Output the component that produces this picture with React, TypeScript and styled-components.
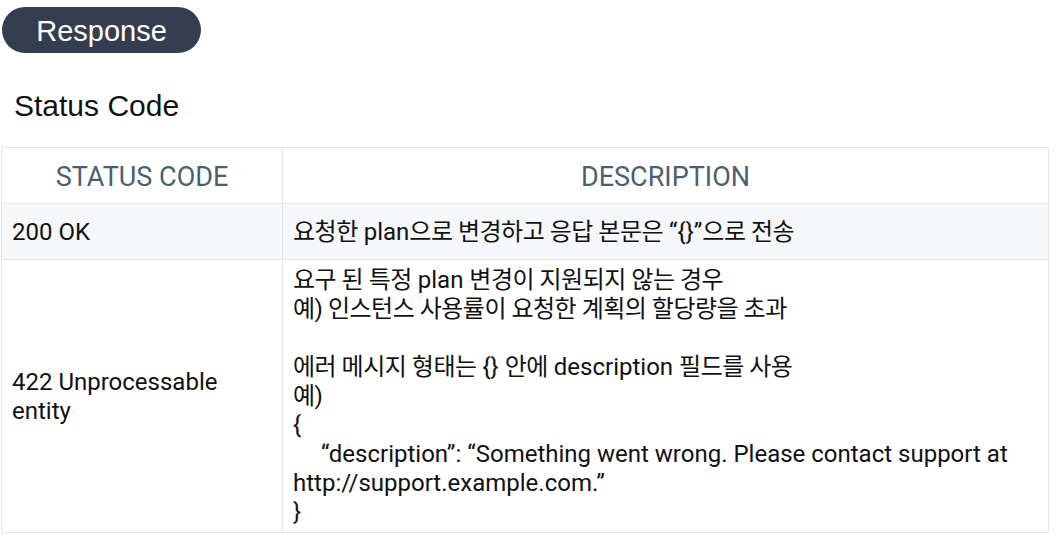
import React from "react";
import styled, { createGlobalStyle } from "styled-components";

const GlobalStyle = createGlobalStyle`
  html, body { margin: 0; padding: 0; background: #ffffff; }
  body { font-family: Roboto, "Noto Sans CJK KR", sans-serif; color: #111111; }
`;

const Page = styled.div`
  padding: 7px 9px 0 1px;
  display: flex;
  flex-direction: column;
  align-items: flex-start;
`;

const Badge = styled.div`
  margin-left: 1px;
  width: 199px;
  height: 46px;
  box-sizing: border-box;
  padding-top: 2px;
  border-radius: 23px;
  background: #343e50;
  color: #ffffff;
  font-family: "Liberation Sans", Arial, sans-serif;
  font-size: 29px;
  display: flex;
  align-items: center;
  justify-content: center;
`;

const Title = styled.h2`
  margin: 35px 0 0 13px;
  font-family: "Liberation Sans", Arial, sans-serif;
  font-weight: 400;
  font-size: 30px;
  line-height: 36px;
  color: #111111;
`;

const Table = styled.table`
  margin-top: 23px;
  width: 1048px;
  border-collapse: collapse;
  font-size: 24px;
  line-height: 29px;
`;

const HeadCell = styled.th<{ $w?: number }>`
  width: ${(p) => (p.$w ? `${p.$w}px` : "auto")};
  height: 52px;
  padding: 3px 10px 0;
  border: 1px solid #e4e6ea;
  font-weight: 400;
  font-size: 27px;
  color: #4b5f6f;
  text-align: center;
  vertical-align: middle;
  background: #ffffff;
`;

const Row = styled.tr<{ $shade?: boolean }>`
  background: ${(p) => (p.$shade ? "#f6f7f9" : "#ffffff")};
`;

const Cell = styled.td<{ $tall?: boolean }>`
  height: ${(p) => (p.$tall ? "auto" : "53px")};
  padding: ${(p) => (p.$tall ? "6px 10px 5px" : "2px 10px 0")};
  border: 1px solid #e4e6ea;
  vertical-align: middle;
  text-align: left;
  color: #111111;
`;

const Line = styled.div<{ $indent?: boolean }>`
  min-height: 29px;
  text-indent: ${(p) => (p.$indent ? "28px" : "0")};
`;

const Ko = styled.span`
  letter-spacing: -0.5px;
`;

export default function App() {
  return (
    <>
      <GlobalStyle />
      <Page>
        <Badge>Response</Badge>
        <Title>Status Code</Title>
        <Table>
          <thead>
            <tr>
              <HeadCell $w={260}>STATUS CODE</HeadCell>
              <HeadCell>DESCRIPTION</HeadCell>
            </tr>
          </thead>
          <tbody>
            <Row $shade>
              <Cell>200 OK</Cell>
              <Cell>
                <Ko>요청한</Ko> plan<Ko>으로 변경하고 응답 본문은</Ko> “{"{}"}”<Ko>으로 전송</Ko>
              </Cell>
            </Row>
            <Row>
              <Cell>
                422 Unprocessable
                <br />
                entity
              </Cell>
              <Cell $tall>
                <Line>
                  <Ko>요구 된 특정</Ko> plan <Ko>변경이 지원되지 않는 경우</Ko>
                </Line>
                <Line>
                  <Ko>예) 인스턴스 사용률이 요청한 계획의 할당량을 초과</Ko>
                </Line>
                <Line />
                <Line>
                  <Ko>에러 메시지 형태는</Ko> {"{}"} <Ko>안에</Ko> description <Ko>필드를 사용</Ko>
                </Line>
                <Line>
                  <Ko>예)</Ko>
                </Line>
                <Line>{"{"}</Line>
                <Line $indent>
                  “description”: “Something went wrong. Please contact support at http://support.example.com.”
                </Line>
                <Line>{"}"}</Line>
              </Cell>
            </Row>
          </tbody>
        </Table>
      </Page>
    </>
  );
}
